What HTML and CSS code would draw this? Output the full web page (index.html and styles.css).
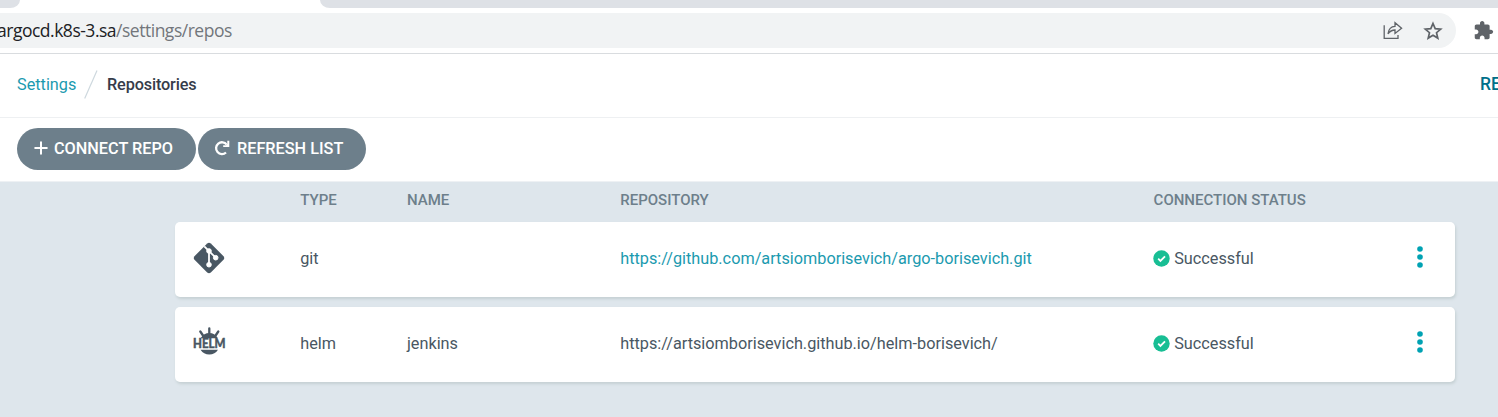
FILE: index.html
```
<!DOCTYPE html>
<html lang="en">
<head>
<meta charset="utf-8">
<title>Repositories</title>
<link rel="stylesheet" href="styles.css">
</head>
<body>
<div class="tabs"><div class="tab-left"></div><div class="tab-right"></div></div>
<div class="browser">
  <div class="omnibox">
    <div class="url"><span class="host">argocd.k8s-3.sa</span>/settings/repos</div>
    <svg class="share" width="20" height="20" viewBox="0 0 20 20" fill="none" stroke="#5f6368" stroke-width="1.3"><path d="M1.2 4.2V17.4H15V14M5 12.8C5.6 8 8 5.6 12 5.4V1.7L18.6 7.2L12 12.5V9C9 9 7 10 5 12.8Z"/></svg>
    <svg class="star" width="20" height="20" viewBox="0 0 20 20" fill="none" stroke="#5f6368" stroke-width="1.7"><path d="M10 2.500L12.200 7.600L17.700 8.100L13.500 11.700L14.800 17.100L10 14.200L5.200 17.100L6.500 11.700L2.300 8.100L7.800 7.600Z"/></svg>
  </div>
  <svg class="puzzle" width="21" height="21" viewBox="0 0 24 24" fill="#5f6368"><path d="M20.5 11H19V7c0-1.100-.9-2-2-2h-4V3.500C13 2.120 11.880 1 10.500 1S8 2.120 8 3.500V5H4c-1.100 0-1.990.9-1.990 2v3.800H3.500c1.490 0 2.700 1.210 2.700 2.700s-1.210 2.700-2.700 2.700H2V20c0 1.100.9 2 2 2h3.800v-1.500c0-1.490 1.210-2.700 2.700-2.700s2.700 1.210 2.700 2.700V22H17c1.100 0 2-.9 2-2v-4h1.500c1.380 0 2.500-1.120 2.500-2.500S21.880 11 20.500 11z"/></svg>
</div>
<header class="crumbs">
  <a class="crumb-link">Settings</a>
  <svg class="slash" width="14" height="29" viewBox="0 0 14 29"><path d="M.7 28.500L13 .5" stroke="#ced8de" stroke-width="1.200"/></svg>
  <span class="crumb-current">Repositories</span>
  <span class="page-title">RE</span>
</header>
<div class="actions">
  <button class="btn connect"><svg width="14" height="14" viewBox="0 0 14 14"><path d="M7 1.200V12.800M1.200 7H12.800" stroke="#fff" stroke-width="2" stroke-linecap="round"/></svg><span>CONNECT REPO</span></button>
  <button class="btn refresh"><svg width="16" height="16" viewBox="0 0 16 16" fill="none"><path d="M12.700 4.600A5.900 5.900 0 1 0 12 12.500" stroke="#fff" stroke-width="2.300"/><path d="M15.300 .8V6.900H9.200V5.200H12L13.300 4V.8Z" fill="#fff"/></svg><span>REFRESH LIST</span></button>
</div>
<main class="content">
  <div class="row head"><div></div><div>TYPE</div><div>NAME</div><div>REPOSITORY</div><div>CONNECTION STATUS</div></div>
  <div class="row card">
    <div class="icon-cell"><svg width="32" height="32" viewBox="0 0 32 32"><path d="M14.200 1.400Q16 0 17.800 1.400L30.500 14.200Q32 16 30.500 17.800L17.800 30.500Q16 32 14.200 30.500L1.500 17.800Q0 16 1.500 14.200Z" fill="#495763"/><g stroke="#fff" fill="#fff"><path d="M11.300 4.300L22.700 15.700M16 9V22.500" fill="none" stroke-width="1.800"/><circle cx="16" cy="9" r="2.300"/><circle cx="22.700" cy="15.700" r="2.300"/><circle cx="16" cy="22.700" r="2.300"/></g></svg></div>
    <div>git</div><div></div><div><a class="repo-link">https://github.com/artsiomborisevich/argo-borisevich.git</a></div>
    <div class="status"><svg width="17" height="17" viewBox="0 0 17 17"><circle cx="8.500" cy="8.500" r="8.200" fill="#18be94"/><path d="M5.200 8.700L7.400 10.900L12 6.300" fill="none" stroke="#fff" stroke-width="1.800"/></svg><span>Successful</span><svg class="dots" width="6" height="22" viewBox="0 0 6 22" fill="#00a2b3"><circle cx="3" cy="3" r="2.800"/><circle cx="3" cy="11" r="2.800"/><circle cx="3" cy="19" r="2.800"/></svg></div>
  </div>
  <div class="row card">
    <div class="icon-cell"><svg class="helm" width="36" height="30" viewBox="0 0 36 30"><path d="M8.500 11.300Q12 6 17.300 6T26 11.300ZM8.500 22.700H26Q23 27.500 17.300 27.500T8.500 22.700Z" fill="#495763"/><path d="M17.300 1.500V6M8.300 4.500L11 8.500M26.300 4.500L23.600 8.500" stroke="#495763" stroke-width="2.300" stroke-linecap="round"/><text x="1" y="21" textLength="32.500" lengthAdjust="spacingAndGlyphs" class="helm-text">HELM</text></svg></div>
    <div>helm</div><div>jenkins</div><div>https://artsiomborisevich.github.io/helm-borisevich/</div>
    <div class="status"><svg width="17" height="17" viewBox="0 0 17 17"><circle cx="8.500" cy="8.500" r="8.200" fill="#18be94"/><path d="M5.200 8.700L7.400 10.900L12 6.300" fill="none" stroke="#fff" stroke-width="1.800"/></svg><span>Successful</span><svg class="dots" width="6" height="22" viewBox="0 0 6 22" fill="#00a2b3"><circle cx="3" cy="3" r="2.800"/><circle cx="3" cy="11" r="2.800"/><circle cx="3" cy="19" r="2.800"/></svg></div>
  </div>
</main>
</body>
</html>
```
FILE: styles.css
```
* { box-sizing: border-box; }
html, body { height: 100%; }
body { margin: 0; overflow: hidden; background: #fff; font: 16.25px Roboto, sans-serif; color: #495763; display: flex; flex-direction: column; }
svg { flex: none; display: block; }
.tabs { height: 8px; display: flex; justify-content: space-between; flex: none; }
.tab-left { width: 20px; background: #dee1e6; border-bottom-right-radius: 10px 8px; }
.tab-right { width: 1178px; background: #dee1e6; border-bottom-left-radius: 10px 8px; }
.browser { height: 46px; flex: none; padding: 5px 0 5px; display: flex; border-bottom: 1px solid #d9dcdf; }
.omnibox { width: 1456px; height: 35px; background: #f1f3f4; border-radius: 0 17.5px 17.5px 0; display: flex; align-items: center; padding-right: 13px; }
.url { flex: 1; font: 17.5px "Open Sans", sans-serif; letter-spacing: -0.49px; color: #72767b; margin-left: -3px; padding-bottom: 1px; white-space: nowrap; }
.host { color: #202124; }
.share { margin-right: -1px; }
.star { margin-left: 21px; }
.puzzle { margin: 7px 0 0 17px; }
.crumbs { height: 64px; flex: none; display: flex; align-items: center; padding-left: 17px; padding-bottom: 2px; border-bottom: 1px solid #eef0f2; white-space: nowrap; }
.crumb-link { color: #1b9aaf; width: 59px; }
.slash { margin-left: 8px; }
.crumb-current { margin-left: 9px; color: #363c4a; font-weight: 500; letter-spacing: -0.14px; }
.page-title { margin-left: auto; width: 18px; padding-bottom: 2px; font-size: 17.5px; font-weight: 500; color: #006f8a; }
.actions { height: 64px; flex: none; display: flex; gap: 2px; padding: 10px 0 0 17px; border-bottom: 1px solid #eef1f4; }
.btn { height: 42px; border: 0; border-radius: 21px; background: #6d7f8b; color: #fff; display: flex; align-items: center; gap: 6px; padding: 0 0 2px 17px; font: 500 16.25px Roboto, sans-serif; white-space: nowrap; }
.connect { width: 179px; }
.refresh { width: 168px; }
.refresh svg { margin: 0 1px 0 -1px; }
.content { flex: 1; background: #dee6ec; padding: 0 43px 0 175px; }
.row { display: grid; grid-template-columns: 1fr 1fr 2fr 5fr 3fr; align-items: center; white-space: nowrap; }
.row > div { padding-left: 18.6px; }
.head { height: 40px; padding-bottom: 4px; font-size: 15px; font-weight: 500; color: #6d7f8b; }
.card { height: 75px; background: #fff; border-radius: 5px; margin-bottom: 10px; box-shadow: 1px 2px 3px #c5d0d3; padding-bottom: 2px; }
.row > .icon-cell { padding: 0 0 1px 18px; }
.repo-link { color: #1b9aaf; }
.status { display: flex; align-items: center; gap: 4.4px; }
.status svg:first-child { margin: -1px 0 0 -0.8px; }
.status .dots { margin: -4px 32px 0 auto; }
.helm { margin: -3px 0 0 -1px; }
.helm-text { font: 900 12.5px Lato, sans-serif; fill: #495763; stroke: #495763; stroke-width: 0.4px; }
```
